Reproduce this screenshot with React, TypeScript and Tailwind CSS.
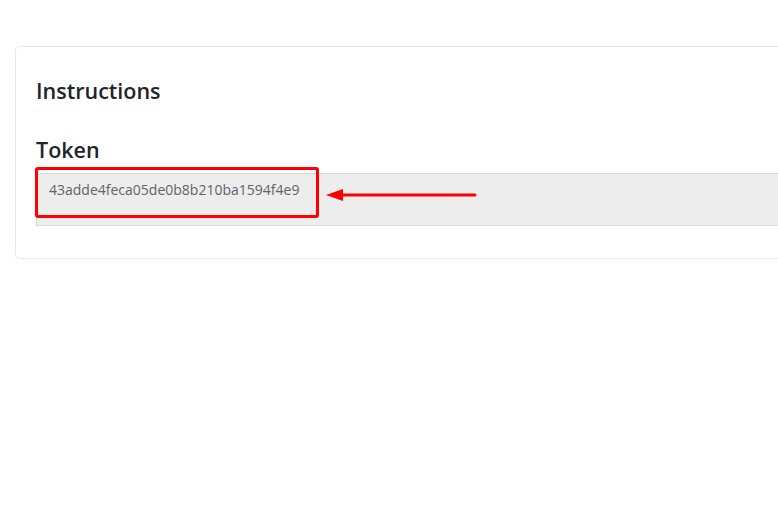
import React from "react";

export default function App() {
  return (
    <div
      className="relative w-screen h-screen overflow-hidden bg-white"
      style={{ fontFamily: '"Open Sans", "Noto Sans", sans-serif' }}
    >
      <div className="ml-[15px] mt-[46px] w-[820px] rounded-[4px] border border-[#e6e8eb] bg-white px-[20px] pt-[31px] pb-[32px]">
        <h2 className="text-[21.5px] leading-[26px] font-semibold text-[#212529]">Instructions</h2>
        <h3 className="mt-[33px] text-[21.5px] leading-[26px] font-semibold text-[#212529]">Token</h3>
        <div className="mt-[10px] h-[53px] w-full border border-[#d3d8dd] bg-[#ededed] pl-[12px] pt-[6px] text-[14px] leading-[20px] text-[#5f6368]">
          43adde4feca05de0b8b210ba1594f4e9
        </div>
      </div>
      <div className="absolute left-[35px] top-[167px] h-[51px] w-[284px] rounded-[3px] border-[3px] border-[#ff0000]" />
      <svg className="absolute left-[324px] top-[187px]" width="154" height="16" viewBox="0 0 154 16">
        <line x1="14" y1="8" x2="151" y2="8" stroke="#ff0000" strokeWidth="3" strokeLinecap="round" />
        <polygon points="2,8 19,2 19,14" fill="#ff0000" />
      </svg>
    </div>
  );
}
